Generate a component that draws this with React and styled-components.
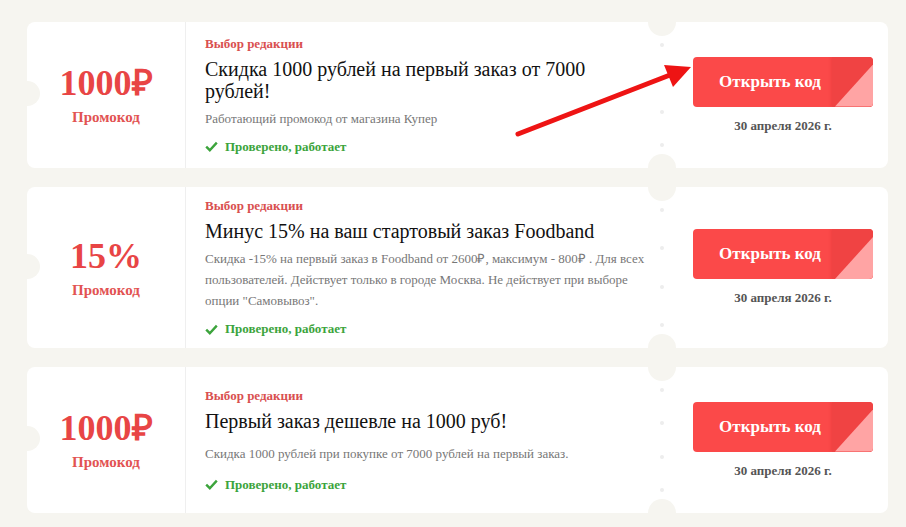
import React from "react";
import styled, { createGlobalStyle } from "styled-components";

const offers = [
  {
    amount: "1000₽",
    title: "Скидка 1000 рублей на первый заказ от 7000 рублей!",
    text: "Работающий промокод от магазина Купер",
  },
  {
    amount: "15%",
    title: "Минус 15% на ваш стартовый заказ Foodband",
    text: "Скидка -15% на первый заказ в Foodband от 2600₽, максимум - 800₽ . Для всех пользователей. Действует только в городе Москва. Не действует при выборе опции \"Самовывоз\".",
  },
  {
    amount: "1000₽",
    title: "Первый заказ дешевле на 1000 руб!",
    text: "Скидка 1000 рублей при покупке от 7000 рублей на первый заказ.",
    spaced: true,
  },
];

function CheckIcon() {
  return (
    <svg width="13" height="11" viewBox="0 0 13 11">
      <path d="M1.2 5.6 L4.8 9.2 L11.8 1.6" fill="none" stroke="#3ca43c" strokeWidth="2.4" />
    </svg>
  );
}

function Arrow() {
  return (
    <ArrowLayer viewBox="0 0 906 527">
      <line x1="518" y1="134" x2="670" y2="75" stroke="#ee1414" strokeWidth="5" strokeLinecap="round" />
      <polygon points="691,67 664,65 673,87" fill="#ee1414" />
    </ArrowLayer>
  );
}

function Offer(props) {
  const offer = props.offer;
  return (
    <Card>
      <Notch />
      <Value>
        <Amount>{offer.amount}</Amount>
        <Kind>Промокод</Kind>
      </Value>
      <Body>
        <Tag>Выбор редакции</Tag>
        <Title>{offer.title}</Title>
        <Text $spaced={offer.spaced}>{offer.text}</Text>
        <Verified $spaced={offer.spaced}>
          <CheckIcon />
          Проверено, работает
        </Verified>
      </Body>
      <Perforation>
        <Hole />
        <Dot />
        <Dot />
        <Dot />
        <Dot />
        <Hole $bottom />
      </Perforation>
      <Stub>
        <OpenButton>
          <span>Открыть код</span>
        </OpenButton>
        <Expires>30 апреля 2026 г.</Expires>
      </Stub>
    </Card>
  );
}

export default function App() {
  return (
    <Page>
      <GlobalStyle />
      {offers.map((offer, index) => (
        <Offer key={index} offer={offer} />
      ))}
      <Arrow />
    </Page>
  );
}

const GlobalStyle = createGlobalStyle`
  html, body {
    margin: 0;
    padding: 0;
    background: #f6f5f0;
  }
  body {
    font-family: "Liberation Serif", "Times New Roman", serif;
  }
`;

const Page = styled.div`
  position: relative;
  width: 906px;
  height: 527px;
  overflow: hidden;
  box-sizing: border-box;
  padding: 22px 18px 0 27px;
  display: flex;
  flex-direction: column;
  gap: 19px;
`;

const ArrowLayer = styled.svg`
  position: absolute;
  left: 0;
  top: 0;
  width: 906px;
  height: 527px;
  pointer-events: none;
`;

const Card = styled.div`
  position: relative;
  display: flex;
  min-height: 146px;
  background: #ffffff;
  border-radius: 8px;
  overflow: hidden;
`;

const Notch = styled.span`
  position: absolute;
  left: -12px;
  top: 50%;
  margin-top: -14px;
  width: 25px;
  height: 25px;
  border-radius: 50%;
  background: #f6f5f0;
`;

const Value = styled.div`
  flex: none;
  width: 158px;
  display: flex;
  flex-direction: column;
  align-items: center;
  justify-content: center;
  border-right: 1px solid #efefef;
`;

const Amount = styled.div`
  font-size: 36px;
  font-weight: 700;
  line-height: 40px;
  color: #e84545;
`;

const Kind = styled.div`
  margin-top: 4px;
  font-size: 15px;
  font-weight: 700;
  line-height: 20px;
  color: #e25353;
`;

const Body = styled.div`
  flex: 1;
  padding: 10px 10px 10px 19px;
  display: flex;
  flex-direction: column;
  justify-content: center;
`;

const Tag = styled.div`
  font-size: 13px;
  font-weight: 700;
  line-height: 18px;
  color: #d95050;
`;

const Title = styled.div`
  margin-top: 5px;
  font-size: 20px;
  line-height: 22px;
  color: #111111;
`;

const Text = styled.div`
  margin-top: ${p => (p.$spaced ? "11px" : "6px")};
  font-size: 13px;
  line-height: 21px;
  color: #777777;
`;

const Verified = styled.div`
  margin-top: ${p => (p.$spaced ? "12px" : "9px")};
  display: flex;
  align-items: center;
  gap: 7px;
  font-size: 13px;
  font-weight: 700;
  line-height: 18px;
  color: #3ca43c;
`;

const Perforation = styled.div`
  position: relative;
  flex: none;
  width: 0;
  padding: 21px 0;
  display: flex;
  flex-direction: column;
  justify-content: space-between;
`;

const Dot = styled.span`
  width: 4px;
  height: 4px;
  margin-left: -2px;
  border-radius: 50%;
  background: #ededed;
`;

const Hole = styled.span`
  position: absolute;
  left: -14px;
  ${p => (p.$bottom ? "bottom: -14px;" : "top: -14px;")}
  width: 28px;
  height: 28px;
  border-radius: 50%;
  background: #f6f5f0;
`;

const Stub = styled.div`
  flex: none;
  width: 226px;
  box-sizing: border-box;
  padding: 0 15px 0 31px;
  display: flex;
  flex-direction: column;
  align-items: center;
  justify-content: center;
  gap: 11px;
`;

const OpenButton = styled.button`
  position: relative;
  width: 180px;
  height: 50px;
  padding: 0 26px 0 0;
  border: none;
  border-radius: 4px;
  overflow: hidden;
  background: #fb4949;
  color: #ffffff;
  font-family: inherit;
  font-size: 17px;
  font-weight: 700;
  cursor: pointer;

  span {
    position: relative;
    z-index: 1;
  }

  &::before {
    content: "";
    position: absolute;
    top: 0;
    right: 0;
    width: 41px;
    height: 100%;
    background: #f04343;
    box-shadow: -1px 0 3px rgba(160, 20, 20, 0.15);
  }

  &::after {
    content: "";
    position: absolute;
    right: 0;
    bottom: 0;
    width: 38px;
    height: 42px;
    background: #ffa4a4;
    clip-path: polygon(100% 0, 100% 100%, 0 100%);
  }
`;

const Expires = styled.div`
  font-size: 13px;
  font-weight: 700;
  line-height: 16px;
  color: #555555;
`;
